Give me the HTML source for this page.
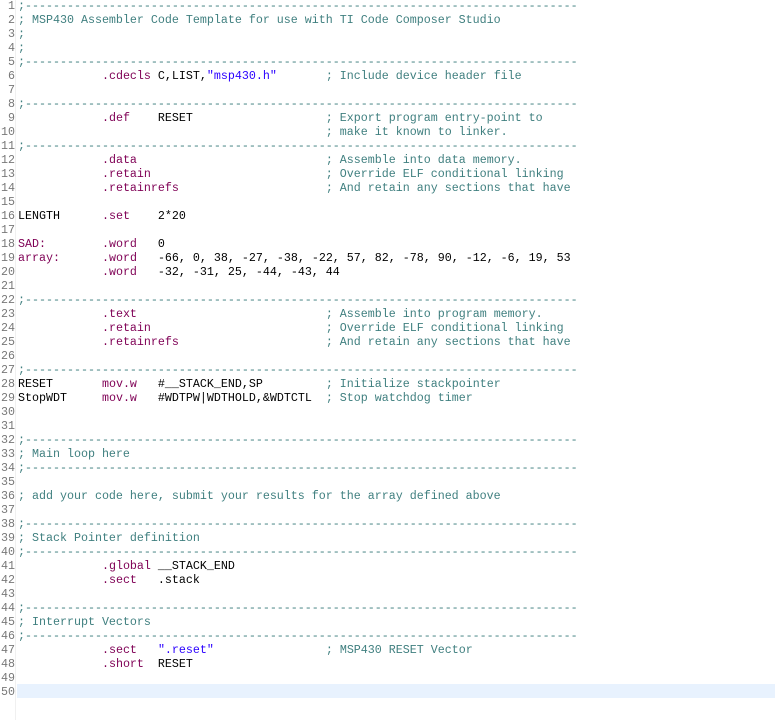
<!DOCTYPE html>
<html><head><meta charset="utf-8"><style>
html,body{margin:0;padding:0;background:#fff;width:775px;height:708px;overflow:hidden}
.w{position:absolute;left:0;top:-1px;width:775px}
.l{height:14px;line-height:14px;position:relative;white-space:pre;font-family:"Liberation Mono",monospace;font-size:11.67px;color:#000}
.n{position:absolute;left:0;width:15px;text-align:right;color:#787878}
.c{position:absolute;left:18px}
.g{color:#3f7f7f}.k{color:#7f0055}.s{color:#2a00ff}
.hl{background:#e8f2fe;position:absolute;left:17px;right:0;top:-1px;height:14px}
.bd{position:absolute;left:15px;top:0;width:1px;height:720px;background:#f0f0f0}
</style></head><body>
<div class="bd"></div>
<div class="w">
<div class="l"><span class="n">1</span><span class="c g">;-------------------------------------------------------------------------------</span></div>
<div class="l"><span class="n">2</span><span class="c g">; MSP430 Assembler Code Template for use with TI Code Composer Studio</span></div>
<div class="l"><span class="n">3</span><span class="c g">;</span></div>
<div class="l"><span class="n">4</span><span class="c g">;</span></div>
<div class="l"><span class="n">5</span><span class="c g">;-------------------------------------------------------------------------------</span></div>
<div class="l"><span class="n">6</span><span class="c">            <span class="k">.cdecls</span> C,LIST,<span class="s">"msp430.h"</span>       <span class="g">; Include device header file</span></span></div>
<div class="l"><span class="n">7</span></div>
<div class="l"><span class="n">8</span><span class="c g">;-------------------------------------------------------------------------------</span></div>
<div class="l"><span class="n">9</span><span class="c">            <span class="k">.def</span>    RESET                   <span class="g">; Export program entry-point to</span></span></div>
<div class="l"><span class="n">10</span><span class="c">                                            <span class="g">; make it known to linker.</span></span></div>
<div class="l"><span class="n">11</span><span class="c g">;-------------------------------------------------------------------------------</span></div>
<div class="l"><span class="n">12</span><span class="c">            <span class="k">.data</span>                           <span class="g">; Assemble into data memory.</span></span></div>
<div class="l"><span class="n">13</span><span class="c">            <span class="k">.retain</span>                         <span class="g">; Override ELF conditional linking</span></span></div>
<div class="l"><span class="n">14</span><span class="c">            <span class="k">.retainrefs</span>                     <span class="g">; And retain any sections that have</span></span></div>
<div class="l"><span class="n">15</span></div>
<div class="l"><span class="n">16</span><span class="c">LENGTH      <span class="k">.set</span>    2*20</span></div>
<div class="l"><span class="n">17</span></div>
<div class="l"><span class="n">18</span><span class="c"><span class="k">SAD:</span>        <span class="k">.word</span>   0</span></div>
<div class="l"><span class="n">19</span><span class="c"><span class="k">array:</span>      <span class="k">.word</span>   -66, 0, 38, -27, -38, -22, 57, 82, -78, 90, -12, -6, 19, 53</span></div>
<div class="l"><span class="n">20</span><span class="c">            <span class="k">.word</span>   -32, -31, 25, -44, -43, 44</span></div>
<div class="l"><span class="n">21</span></div>
<div class="l"><span class="n">22</span><span class="c g">;-------------------------------------------------------------------------------</span></div>
<div class="l"><span class="n">23</span><span class="c">            <span class="k">.text</span>                           <span class="g">; Assemble into program memory.</span></span></div>
<div class="l"><span class="n">24</span><span class="c">            <span class="k">.retain</span>                         <span class="g">; Override ELF conditional linking</span></span></div>
<div class="l"><span class="n">25</span><span class="c">            <span class="k">.retainrefs</span>                     <span class="g">; And retain any sections that have</span></span></div>
<div class="l"><span class="n">26</span></div>
<div class="l"><span class="n">27</span><span class="c g">;-------------------------------------------------------------------------------</span></div>
<div class="l"><span class="n">28</span><span class="c">RESET       <span class="k">mov.w</span>   #__STACK_END,SP         <span class="g">; Initialize stackpointer</span></span></div>
<div class="l"><span class="n">29</span><span class="c">StopWDT     <span class="k">mov.w</span>   #WDTPW|WDTHOLD,&amp;WDTCTL  <span class="g">; Stop watchdog timer</span></span></div>
<div class="l"><span class="n">30</span></div>
<div class="l"><span class="n">31</span></div>
<div class="l"><span class="n">32</span><span class="c g">;-------------------------------------------------------------------------------</span></div>
<div class="l"><span class="n">33</span><span class="c g">; Main loop here</span></div>
<div class="l"><span class="n">34</span><span class="c g">;-------------------------------------------------------------------------------</span></div>
<div class="l"><span class="n">35</span></div>
<div class="l"><span class="n">36</span><span class="c g">; add your code here, submit your results for the array defined above</span></div>
<div class="l"><span class="n">37</span></div>
<div class="l"><span class="n">38</span><span class="c g">;-------------------------------------------------------------------------------</span></div>
<div class="l"><span class="n">39</span><span class="c g">; Stack Pointer definition</span></div>
<div class="l"><span class="n">40</span><span class="c g">;-------------------------------------------------------------------------------</span></div>
<div class="l"><span class="n">41</span><span class="c">            <span class="k">.global</span> __STACK_END</span></div>
<div class="l"><span class="n">42</span><span class="c">            <span class="k">.sect</span>   .stack</span></div>
<div class="l"><span class="n">43</span></div>
<div class="l"><span class="n">44</span><span class="c g">;-------------------------------------------------------------------------------</span></div>
<div class="l"><span class="n">45</span><span class="c g">; Interrupt Vectors</span></div>
<div class="l"><span class="n">46</span><span class="c g">;-------------------------------------------------------------------------------</span></div>
<div class="l"><span class="n">47</span><span class="c">            <span class="k">.sect</span>   <span class="s">".reset"</span>                <span class="g">; MSP430 RESET Vector</span></span></div>
<div class="l"><span class="n">48</span><span class="c">            <span class="k">.short</span>  RESET</span></div>
<div class="l"><span class="n">49</span></div>
<div class="l"><span class="hl"></span><span class="n">50</span></div>
</div>
</body></html>
